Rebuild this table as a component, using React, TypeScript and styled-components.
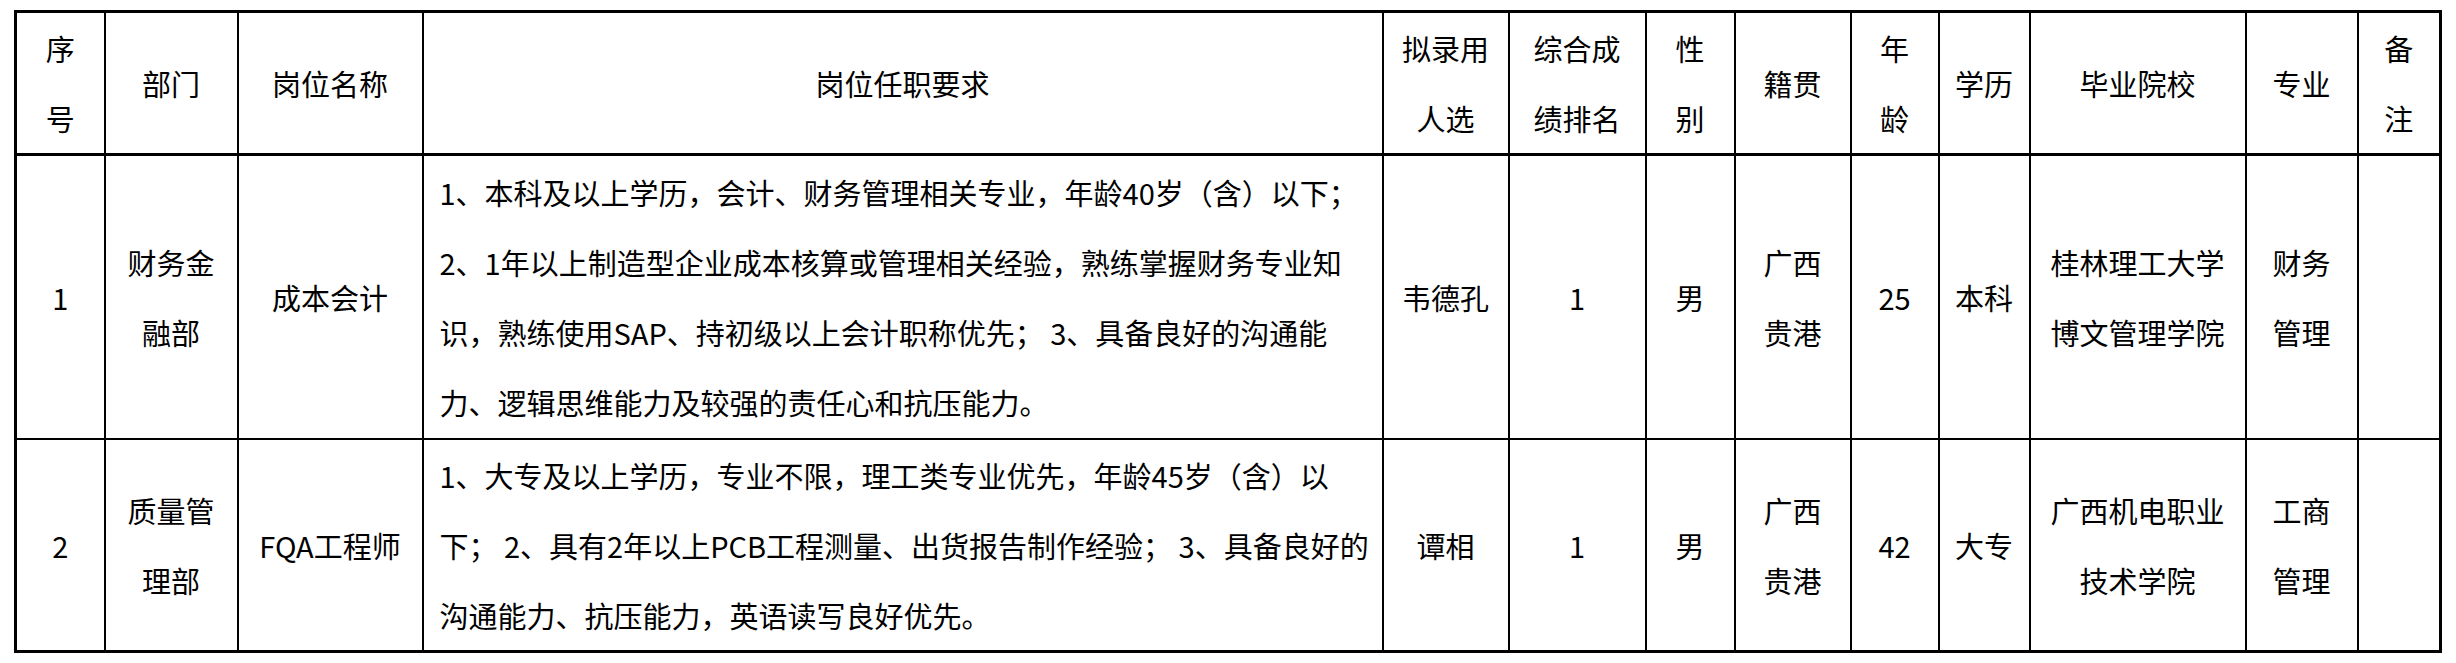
import React from "react";
import styled, { createGlobalStyle } from "styled-components";

const GlobalStyle = createGlobalStyle`
  html, body {
    margin: 0;
    padding: 0;
    background: #ffffff;
  }
  body {
    font-family: "Noto Sans CJK SC", "Noto Sans", sans-serif;
    color: #000000;
  }
`;

const Page = styled.div`
  padding: 10px 0 0 14px;
`;

const Table = styled.table`
  border-collapse: collapse;
  table-layout: fixed;
  width: 2427px;
  border: 3px solid #000000;
  font-size: 29px;
  line-height: 70px;
  font-weight: 400;
`;

const Row = styled.tr<{ $h: number }>`
  height: ${(p) => p.$h}px;
`;

const HeadCell = styled.th`
  border: 2px solid #000000;
  border-bottom-width: 3px;
  padding: 0;
  font-weight: 400;
  text-align: center;
  vertical-align: middle;
  white-space: nowrap;
`;

const Cell = styled.td<{ $left?: boolean }>`
  border: 2px solid #000000;
  padding: ${(p) => (p.$left ? "0 0 0 16px" : "0")};
  text-align: ${(p) => (p.$left ? "left" : "center")};
  vertical-align: middle;
  white-space: nowrap;
`;

const widths = [89, 133, 185, 960, 126, 137, 89, 116, 88, 91, 216, 112, 83];

const headers: string[][] = [
  ["序", "号"],
  ["部门"],
  ["岗位名称"],
  ["岗位任职要求"],
  ["拟录用", "人选"],
  ["综合成", "绩排名"],
  ["性", "别"],
  ["籍贯"],
  ["年", "龄"],
  ["学历"],
  ["毕业院校"],
  ["专业"],
  ["备", "注"],
];

type Rec = { h: number; cells: string[][] };

const rows: Rec[] = [
  {
    h: 284,
    cells: [
      ["1"],
      ["财务金", "融部"],
      ["成本会计"],
      [
        "1、本科及以上学历，会计、财务管理相关专业，年龄40岁（含）以下；",
        "2、1年以上制造型企业成本核算或管理相关经验，熟练掌握财务专业知",
        "识，熟练使用SAP、持初级以上会计职称优先； 3、具备良好的沟通能",
        "力、逻辑思维能力及较强的责任心和抗压能力。",
      ],
      ["韦德孔"],
      ["1"],
      ["男"],
      ["广西", "贵港"],
      ["25"],
      ["本科"],
      ["桂林理工大学", "博文管理学院"],
      ["财务", "管理"],
      [""],
    ],
  },
  {
    h: 213,
    cells: [
      ["2"],
      ["质量管", "理部"],
      ["FQA工程师"],
      [
        "1、大专及以上学历，专业不限，理工类专业优先，年龄45岁（含）以",
        "下； 2、具有2年以上PCB工程测量、出货报告制作经验； 3、具备良好的",
        "沟通能力、抗压能力，英语读写良好优先。",
      ],
      ["谭相"],
      ["1"],
      ["男"],
      ["广西", "贵港"],
      ["42"],
      ["大专"],
      ["广西机电职业", "技术学院"],
      ["工商", "管理"],
      [""],
    ],
  },
];

const Lines: React.FC<{ lines: string[] }> = ({ lines }) => (
  <>
    {lines.map((l, i) => (
      <React.Fragment key={i}>
        {i > 0 && <br />}
        {l}
      </React.Fragment>
    ))}
  </>
);

export default function App() {
  return (
    <>
      <GlobalStyle />
      <Page>
        <Table>
          <colgroup>
            {widths.map((w, i) => (
              <col key={i} style={{ width: w }} />
            ))}
          </colgroup>
          <thead>
            <Row $h={143}>
              {headers.map((h, i) => (
                <HeadCell key={i}>
                  <Lines lines={h} />
                </HeadCell>
              ))}
            </Row>
          </thead>
          <tbody>
            {rows.map((r, ri) => (
              <Row key={ri} $h={r.h}>
                {r.cells.map((c, ci) => (
                  <Cell key={ci} $left={ci === 3}>
                    <Lines lines={c} />
                  </Cell>
                ))}
              </Row>
            ))}
          </tbody>
        </Table>
      </Page>
    </>
  );
}
